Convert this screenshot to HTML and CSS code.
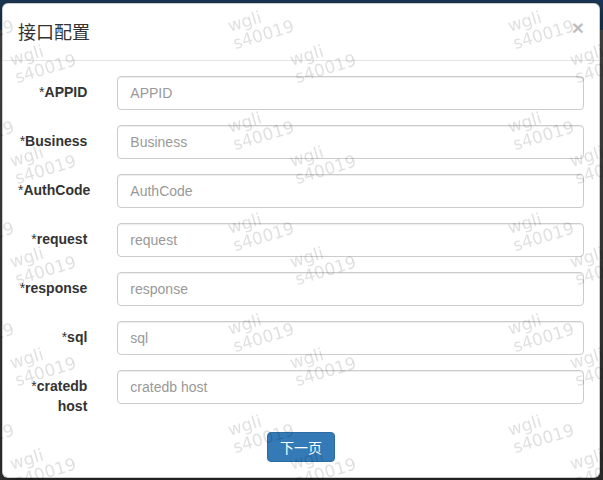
FILE: index.html
```html
<!DOCTYPE html>
<html lang="zh-CN">
<head>
  <meta charset="UTF-8">
  <title>接口配置</title>
  <link rel="stylesheet" href="styles.css">
</head>
<body>

  <div class="modal">
    <div class="modal-content">

      <div class="modal-header">
        <button type="button" class="close">&times;</button>
        <h4 class="modal-title">接口配置</h4>
      </div>

      <div class="modal-body">
        <form class="form-horizontal">
          <div class="form-group">
            <label class="control-label" for="appid"><span class="req">*</span>APPID</label>
            <div class="control"><input id="appid" class="form-control" placeholder="APPID"></div>
          </div>
          <div class="form-group">
            <label class="control-label" for="business"><span class="req">*</span>Business</label>
            <div class="control"><input id="business" class="form-control" placeholder="Business"></div>
          </div>
          <div class="form-group">
            <label class="control-label" for="authcode"><span class="req">*</span>AuthCode</label>
            <div class="control"><input id="authcode" class="form-control" placeholder="AuthCode"></div>
          </div>
          <div class="form-group">
            <label class="control-label" for="request"><span class="req">*</span>request</label>
            <div class="control"><input id="request" class="form-control" placeholder="request"></div>
          </div>
          <div class="form-group">
            <label class="control-label" for="response"><span class="req">*</span>response</label>
            <div class="control"><input id="response" class="form-control" placeholder="response"></div>
          </div>
          <div class="form-group">
            <label class="control-label" for="sql"><span class="req">*</span>sql</label>
            <div class="control"><input id="sql" class="form-control" placeholder="sql"></div>
          </div>
          <div class="form-group">
            <label class="control-label" for="cratedb"><span class="req">*</span>cratedb host</label>
            <div class="control"><input id="cratedb" class="form-control" placeholder="cratedb host"></div>
          </div>
          <div class="form-actions">
            <button type="button" class="btn btn-primary">下一页</button>
          </div>
        </form>
      </div>

    </div>
  </div>

  <!-- 水印 -->
  <svg class="watermark" width="603" height="480" aria-hidden="true">
    <defs>
      <pattern id="wm" x="150" y="0" width="280" height="101" patternUnits="userSpaceOnUse">
        <g transform="translate(80,32) rotate(-17)">
          <text x="0" y="0">wgli</text>
          <text x="0" y="18">s40019</text>
        </g>
        <g transform="translate(142,66) rotate(-17)">
          <text x="0" y="0">wgli</text>
          <text x="0" y="18">s40019</text>
        </g>
      </pattern>
    </defs>
    <rect width="603" height="480" fill="url(#wm)"/>
  </svg>

</body>
</html>
```

FILE: styles.css
```css
html, body {
  height: 100%;
}
body {
  margin: 0;
  overflow: hidden;
  font-family: "Liberation Sans", Arial, "Noto Sans CJK SC", sans-serif;
  font-size: 14px;
  line-height: 1.42857;
  color: #333;
  background: linear-gradient(#1b3756 0, #1b3756 30px, #4e4e4e 30px, #343434 100%);
}

.modal-content {
  box-sizing: border-box;
  width: 598px;
  margin: 3px 0 0 2px;
  background: #fff;
  border: 1px solid rgba(0, 0, 0, 0.2);
  border-radius: 6px;
  box-shadow: 0 5px 15px rgba(0, 0, 0, 0.5);
}

.modal-header {
  padding: 15px;
  border-bottom: 1px solid #e5e5e5;
}
.modal-title {
  margin: 0;
  font-family: "Noto Sans CJK SC", sans-serif;
  font-size: 18px;
  font-weight: normal;
  line-height: 1.42857;
}
.close {
  float: right;
  margin-top: -2px;
  padding: 0;
  border: 0;
  background: none;
  font-family: "Liberation Sans", Arial, sans-serif;
  font-size: 21px;
  font-weight: bold;
  line-height: 1;
  color: #000;
  text-shadow: 0 1px 0 #fff;
  opacity: 0.25;
  cursor: pointer;
}

.modal-body {
  padding: 15px;
}

.form-group {
  display: grid;
  grid-template-columns: 16.66667% 83.33333%;
  margin: 0 -15px 15px;
}
.control-label {
  padding: 7px 15px 0;
  text-align: right;
  font-weight: bold;
}
.control-label .req {
  font-weight: normal;
}
.control {
  padding: 0 15px;
}
.form-control {
  display: block;
  box-sizing: border-box;
  width: 100%;
  height: 34px;
  padding: 6px 12px;
  font: inherit;
  color: #555;
  background: #fff;
  border: 1px solid #ccc;
  border-radius: 4px;
  box-shadow: inset 0 1px 1px rgba(0, 0, 0, 0.075);
}
.form-control::placeholder {
  color: #999;
}

.form-actions {
  text-align: center;
}
.btn {
  display: inline-block;
  padding: 4px 12px;
  font-family: "Noto Sans CJK SC", sans-serif;
  font-size: 14px;
  line-height: 20px;
  border: 1px solid transparent;
  border-radius: 4px;
  cursor: pointer;
}
.btn-primary {
  color: #fff;
  background: #337ab7;
  border-color: #2e6da4;
}

.watermark {
  position: fixed;
  top: 0;
  left: 0;
  pointer-events: none;
}
.watermark text {
  font-family: "DejaVu Sans", sans-serif;
  font-size: 17px;
  fill: rgba(0, 0, 0, 0.12);
}
```
